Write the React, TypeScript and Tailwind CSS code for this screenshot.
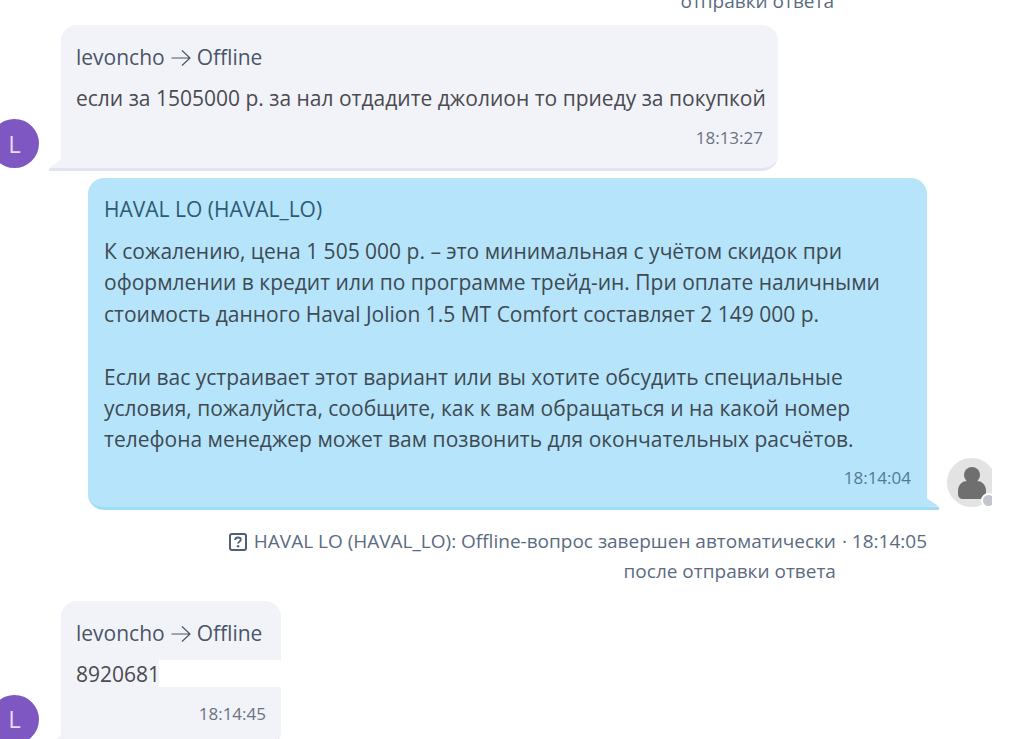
import React, { ReactNode } from "react";

type IncomingProps = {
  text: ReactNode;
  time: string;
  width: string;
};

const Arrow = () => (
  <svg width="20" height="20" viewBox="0 0 20 20" fill="none" stroke="#4b5563" strokeWidth="1.2" className="mx-[6px] inline-block align-[-3px]">
    <path d="M0.5 10h18.5M11 2.5l8 7.5-8 7.5" />
  </svg>
);

const LetterAvatar = () => (
  <div className="mb-[3px] flex h-[49px] w-[49px] shrink-0 items-center justify-center rounded-full bg-[#7e57c2] text-[24px] text-[#e6dcf5]">L</div>
);

const Incoming = ({ text, time, width }: IncomingProps) => (
  <div className="-ml-[10px] flex items-end">
    <LetterAvatar />
    <div className={`relative ml-[22px] rounded-t-[16px] rounded-br-[16px] border-b-[3px] border-[#e3e4f1] bg-[#f2f3f9] ${width}`}>
      <div className="absolute bottom-0 -left-[12px] h-[9px] w-[13px] bg-[#f2f3f9] [clip-path:polygon(100%_0,100%_100%,0_100%)]" />
      <div className="absolute -bottom-[3px] -left-[12px] h-[3px] w-[13px] bg-[#e3e4f1]" />
      <div className="px-[15px] pt-[17px] pb-[18px]">
        <div className="text-[21px] leading-[31px] text-[#4a5568]">
          levoncho
          <Arrow />
          Offline
        </div>
        <div className="mt-[10px] whitespace-nowrap text-[21px] leading-[31px] text-[#4a4a4f]">{text}</div>
        <div className="mt-[12px] text-right text-[17px] leading-[24px] text-[#6b7280]">{time}</div>
      </div>
    </div>
  </div>
);

const SystemNote = ({ children }: { children?: ReactNode }) => (
  <div className="flex justify-end pr-[108px] text-[19px] leading-[30px] text-[#5b6b82]">
    <div className="w-[662px] text-right">{children}</div>
    <div className="ml-[6px] whitespace-pre">· 18:14:05</div>
  </div>
);

const App: React.FC = () => {
  return (
    <div className="h-[739px] w-[1035px] overflow-hidden bg-white font-['Open_Sans',sans-serif]">
      <div className="-mt-[14px] h-[30px] pr-[201px] text-right text-[19px] leading-[30px] text-[#5b6b82]">отправки ответа</div>
      <div className="pt-[9px]">
        <Incoming text="если за 1505000 р. за нал отдадите джолион то приеду за покупкой" time="18:13:27" width="w-[717px]" />
      </div>

      <div className="mt-[7px] flex items-end pl-[88px]">
        <div className="relative w-[839px] rounded-t-[16px] rounded-bl-[16px] border-b-[3px] border-[#9fdcf6] bg-[#b5e4fb]">
          <div className="absolute right-[-12px] bottom-0 h-[9px] w-[13px] bg-[#b5e4fb] [clip-path:polygon(0_0,100%_100%,0_100%)]" />
          <div className="absolute right-[-12px] -bottom-[3px] h-[3px] w-[13px] bg-[#9fdcf6]" />
          <div className="px-[16px] pt-[16px] pb-[17px]">
            <div className="text-[21px] leading-[31px] text-[#2f5a73]">HAVAL LO (HAVAL_LO)</div>
            <div className="mt-[11px] text-[21px] leading-[31.4px] text-[#3e4a52]">
              <p>К сожалению, цена 1 505 000 р. – это минимальная с учётом скидок при</p>
              <p>оформлении в кредит или по программе трейд-ин. При оплате наличными</p>
              <p>стоимость данного Haval Jolion 1.5 MT Comfort составляет 2 149 000 р.</p>
              <p className="mt-[31.4px]">Если вас устраивает этот вариант или вы хотите обсудить специальные</p>
              <p>условия, пожалуйста, сообщите, как к вам обращаться и на какой номер</p>
              <p>телефона менеджер может вам позвонить для окончательных расчётов.</p>
            </div>
            <div className="mt-[10px] text-right text-[17px] leading-[24px] text-[#547a92]">18:14:04</div>
          </div>
        </div>
        <div className="relative mb-[3px] ml-[20px] h-[49px] w-[45px] overflow-hidden">
          <div className="flex h-[49px] w-[49px] items-center justify-center rounded-full bg-[#e3e3e3]">
            <svg width="30" height="33" viewBox="0 0 30 33" fill="#6f6f6f">
              <circle cx="15" cy="9" r="8" />
              <path d="M1 25c0-7 5-10 9-10h10c4 0 9 3 9 10v3c0 3-2 5-5 5H6c-3 0-5-2-5-5z" />
            </svg>
          </div>
          <div className="absolute -right-[4px] bottom-[-1px] h-[15px] w-[15px] rounded-full border-[2px] border-white bg-[#c2c6cc]" />
        </div>
      </div>

      <div className="mt-[16px]">
        <SystemNote>
          <svg width="18" height="18" viewBox="0 0 18 18" fill="none" className="mr-[7px] inline-block align-[-3px]">
            <rect x="1" y="1" width="16" height="16" rx="2" stroke="#4f5f78" strokeWidth="2" />
            <path d="M6.2 7c0-1.7 1.3-2.5 2.8-2.5s2.8.9 2.8 2.3c0 1.8-2.7 1.9-2.7 3.6" stroke="#4f5f78" strokeWidth="1.8" />
            <circle cx="9.1" cy="13.3" r="1.2" fill="#4f5f78" />
          </svg>
          HAVAL LO (HAVAL_LO): Offline-вопрос завершен автоматически после отправки ответа
        </SystemNote>
      </div>

      <div className="mt-[15px]">
        <Incoming
          text={
            <div className="relative">
              8920681
              <span className="absolute top-[1px] -right-[15px] bottom-[3px] left-[83px] bg-white" />
            </div>
          }
          time="18:14:45"
          width="w-[220px]"
        />
      </div>
    </div>
  );
};

export default App;
